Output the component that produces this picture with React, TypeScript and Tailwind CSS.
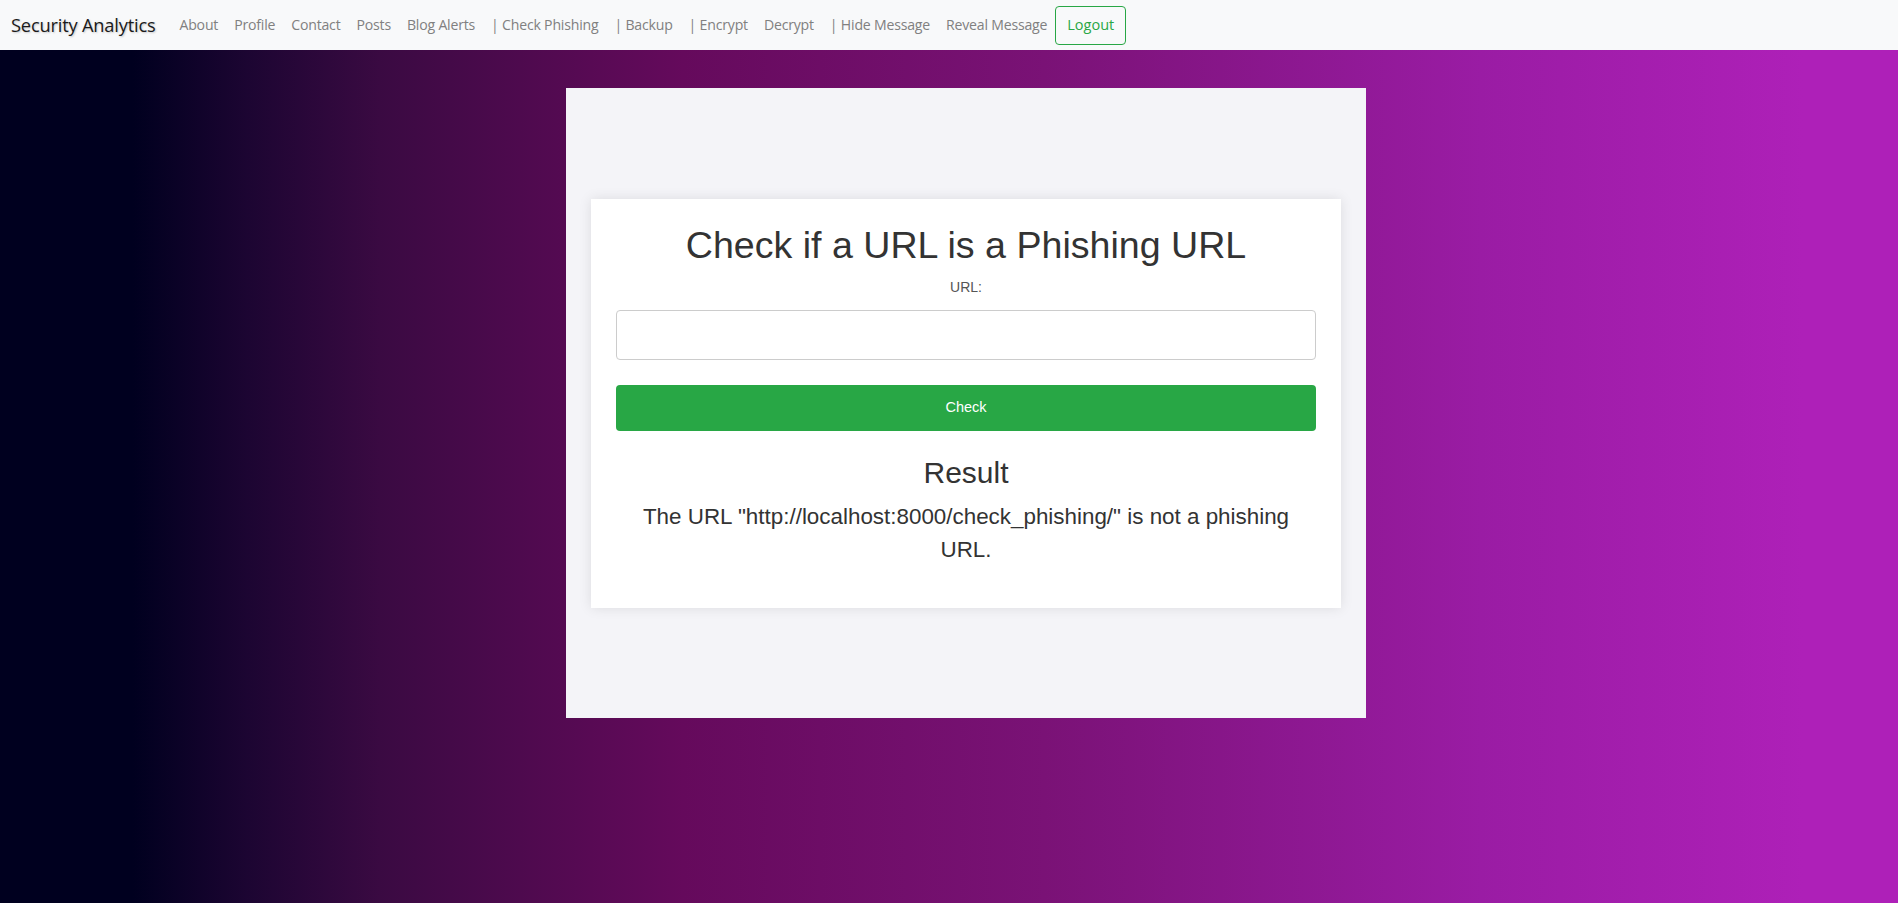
import { useState } from 'react'

const navLinks = ['About', 'Profile', 'Contact', 'Posts', 'Blog Alerts', '| Check Phishing', '| Backup', '| Encrypt', 'Decrypt', '| Hide Message', 'Reveal Message']

export default function App() {
  const [url, setUrl] = useState('')

  return (
    <div className="min-h-screen flex flex-col bg-[linear-gradient(90deg,#00001f_7%,#1c0532_13%,#3a0a42_20%,#650a5c_36%,#7a1276_55%,#9a1ca4_78%,#ae20b8_95%)]">
      {/* Navbar */}
      <nav className="h-[50px] bg-[#f8f9fa] flex items-center pl-[11px] font-['Open_Sans',sans-serif]">
        <a href="#" className="text-[18.3px] text-[#1a1a1a] mr-4 [text-shadow:1px_1px_2px_rgba(0,0,0,0.2)] tracking-[-0.2px]">
          Security Analytics
        </a>
        <div className="flex items-center">
          {navLinks.map(link => (
            <a key={link} href="#" className="px-2 text-[14.1px] text-[#808080] tracking-[-0.2px]">
              {link}
            </a>
          ))}
          <button className="h-[39px] px-[11px] border border-[#28a745] rounded text-[#28a745] text-[14.5px]">
            Logout
          </button>
        </div>
      </nav>

      {/* Panel */}
      <div className="flex justify-center pt-[38px] pl-[34px]">
        <div className="w-[800px] h-[630px] bg-[#f4f4f8] flex items-center justify-center px-[25px]">
          <div className="w-[750px] bg-white shadow-[0_0_12px_rgba(0,0,0,0.1)] px-[25px] pt-6 pb-[42px] text-center font-['Liberation_Sans',Arial,sans-serif] text-[#333]">
            <h1 className="text-[37.6px] leading-[44px]">Check if a URL is a Phishing URL</h1>
            <label className="block mt-[10px] text-[14px] leading-5 text-[#555]">URL:</label>
            <input
              type="text"
              value={url}
              onChange={e => setUrl(e.target.value)}
              className="mt-[13px] w-full h-[50px] border border-[#ccc] rounded px-3 outline-none"
            />
            <button className="mt-[25px] w-full h-[46px] bg-[#28a745] rounded text-white text-[14.5px]">
              Check
            </button>
            <h2 className="mt-6 text-[30px] leading-9">Result</h2>
            <p className="mt-[9px] text-[22.4px] leading-[33px]">
              The URL "http://localhost:8000/check_phishing/" is not a phishing URL.
            </p>
          </div>
        </div>
      </div>
    </div>
  )
}
